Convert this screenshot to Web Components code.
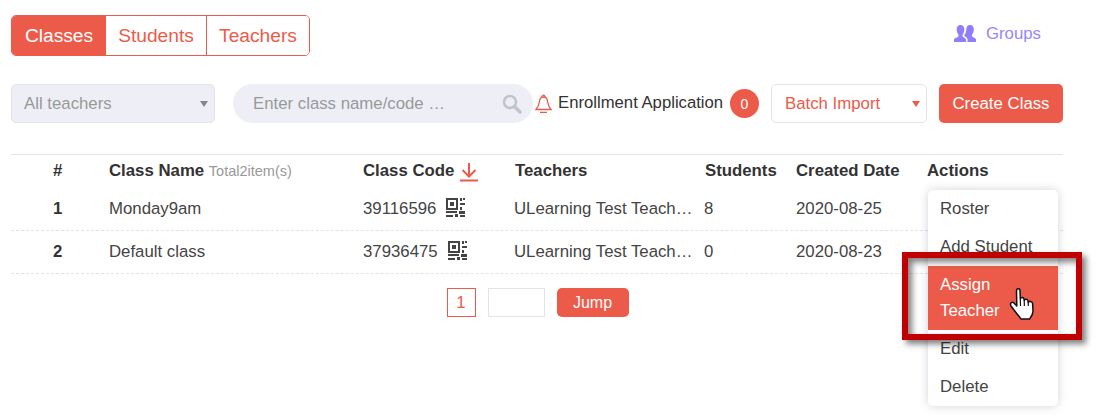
<!DOCTYPE html>
<html lang="en">
<head>
<meta charset="utf-8">
<title>Classes</title>
<style>
    html, body { margin: 0; height: 416px; overflow: hidden; background: #fff; }
    body { font-family: "Liberation Sans", Arial, sans-serif; font-size: 16.8px; color: #444; }
</style>
</head>
<body>
<class-page>
    <top-bar>
        <tab-group>
            <tab-item active style="width: 94px">Classes</tab-item>
            <tab-item style="width: 101px">Students</tab-item>
            <tab-item style="width: 102px">Teachers</tab-item>
        </tab-group>
    </top-bar>
    <filter-bar></filter-bar>
    <class-table>
        <class-row num="1" name="Monday9am" code="39116596" teacher="ULearning Test Teach…" students="8" date="2020-08-25"></class-row>
        <class-row num="2" name="Default class" code="37936475" teacher="ULearning Test Teach…" students="0" date="2020-08-23"></class-row>
    </class-table>
    <page-nav></page-nav>
    <action-menu>
        <menu-item>Roster</menu-item>
        <menu-item>Add Student</menu-item>
        <menu-item active>Assign Teacher</menu-item>
        <menu-item>Edit</menu-item>
        <menu-item>Delete</menu-item>
    </action-menu>
    <call-out></call-out>
    <hand-cursor></hand-cursor>
</class-page>

<script>
// Columnas de la tabla, compartidas por la cabecera y las filas
const COLUMNAS = '42px 56px 254px 152px 190px 91px 131px 136px';

const ICONO_QR = `<svg width="19" height="19" viewBox="0 0 19 19" fill="#444">
    <path fill-rule="evenodd" d="M0 0h12v12H0zM2 2v8h8V2z"/>
    <rect x="4" y="4" width="4" height="4"/>
    <rect x="14" y="0" width="2" height="3"/><rect x="14" y="5" width="5" height="2"/>
    <rect x="14" y="9" width="2" height="3"/>
    <rect x="0" y="13" width="11" height="2"/><rect x="13" y="13" width="6" height="3"/>
    <rect x="0" y="17" width="7" height="2"/><rect x="9" y="16" width="3" height="3"/><rect x="14" y="17" width="5" height="2"/>
    <rect x="17" y="0" width="2" height="2"/>
</svg>`;

// Contenedor general de la pagina
class ClassPage extends HTMLElement {
    constructor() {
        super();
        this.shadow = this.attachShadow({ mode: 'open' });
        this.shadow.innerHTML = `
            <style>
                :host { display: block; position: relative; width: 1097px; height: 416px; box-sizing: border-box; padding: 15px 34px 0 11px; overflow: hidden; }
            </style>
            <slot></slot>
        `;
    }
}

class TopBar extends HTMLElement {
    constructor() {
        super();
        this.shadow = this.attachShadow({ mode: 'open' });
        this.shadow.innerHTML = `
            <style>
                :host { display: flex; justify-content: space-between; align-items: center; height: 41px; }
                .groups { display: flex; align-items: center; gap: 10px; color: #9a86fb; padding-right: 22px; margin-top: -4px; }
            </style>
            <slot></slot>
            <div class="groups">
                <svg width="22" height="18" viewBox="0 0 22 18" fill="#8f7dfa">
                    <path d="M6.500 0C9 0 10.300 2 10.300 4.500c0 2-.8 4-1.800 5.200v1.500c0 1 3.500 1.800 3.500 3.300V17H0v-2.500c0-1.500 4.500-2.300 4.500-3.300V9.700C3.500 8.500 2.700 6.500 2.700 4.500 2.700 2 4 0 6.500 0z"/>
                    <path d="M16 0c2.500 0 3.800 2 3.800 4.500 0 2-.8 4-1.800 5.200v1.500c0 1 4 1.800 4 3.300V17h-8.500v-3c0-1.300-2-2.300-3-2.800v-1.500c1-1.200 1.800-3.200 1.800-5.200C12.300 2 13.500 0 16 0z"/>
                </svg>
                <span>Groups</span>
            </div>
        `;
    }
}

class TabGroup extends HTMLElement {
    constructor() {
        super();
        this.shadow = this.attachShadow({ mode: 'open' });
        this.shadow.innerHTML = `
            <style>
                :host { display: flex; height: 41px; box-sizing: border-box; border: 1px solid #ec5b4a; border-radius: 5px; overflow: hidden; }
            </style>
            <slot></slot>
        `;
    }
}

class TabItem extends HTMLElement {
    constructor() {
        super();
        this.shadow = this.attachShadow({ mode: 'open' });
        this.shadow.innerHTML = `
            <style>
                :host { display: flex; align-items: center; justify-content: center; font-size: 19.2px; color: #ec5b4a; background: #fff; box-sizing: border-box; }
                :host(:nth-child(2)) { border-right: 1px solid #ec5b4a; }
                :host([active]) { background: #ec5b4a; color: #fff; }
            </style>
            <slot></slot>
        `;
    }
}

class FilterBar extends HTMLElement {
    constructor() {
        super();
        this.shadow = this.attachShadow({ mode: 'open' });
        this.shadow.innerHTML = `
            <style>
                :host { display: flex; align-items: center; height: 39px; margin-top: 28px; }
                .select { width: 204px; height: 39px; box-sizing: border-box; display: flex; align-items: center; justify-content: space-between; padding: 0 6px 0 12px; background: #eeeff6; border: 1px solid #e3e3ea; border-radius: 5px; color: #999; }
                .caret { width: 0; height: 0; border-left: 4.500px solid transparent; border-right: 4.500px solid transparent; border-top: 6px solid #888; }
                .search { width: 300px; height: 39px; margin-left: 18px; box-sizing: border-box; display: flex; align-items: center; justify-content: space-between; padding: 0 11px 0 20px; background: #eeeff6; border-radius: 20px; color: #999; }
                .bell { margin-left: 2px; display: block; flex: none; }
                .label { width: 165px; margin-left: 6px; color: #333; margin-top: -2px; font-size: 16.7px; white-space: nowrap; }
                .badge { width: 29px; height: 29px; margin-left: 7px; border-radius: 50%; background: #ec5b4a; color: #fff; font-size: 14px; display: flex; align-items: center; justify-content: center; }
                .batch { width: 156px; height: 39px; margin-left: 12px; box-sizing: border-box; display: flex; align-items: center; justify-content: space-between; padding: 0 6px 0 13px; background: #fff; border: 1px solid #e3e3ea; border-radius: 5px; color: #ec5b4a; }
                .batch .caret { border-top-color: #ec5b4a; }
                .create { width: 124px; height: 39px; margin-left: 12px; display: flex; align-items: center; justify-content: center; background: #ec5b4a; color: #fff; border-radius: 5px; }
            </style>
            <div class="select"><span>All teachers</span><i class="caret"></i></div>
            <div class="search">
                <span>Enter class name/code …</span>
                <svg width="20" height="20" viewBox="0 0 20 20" fill="none" stroke="#c4c4c8">
                    <circle cx="8" cy="8" r="6" stroke-width="2.500"/>
                    <path d="M12.500 12.500L18 18" stroke-width="3.500" stroke-linecap="round"/>
                </svg>
            </div>
            <svg class="bell" width="17" height="20" viewBox="0 0 17 20" fill="none" stroke="#ec5b4a" stroke-width="1.300">
                <path d="M8.500 3C5.500 3 4.500 5.500 4.300 8 4 11.500 3 13 1 15.500h15C14 13 13 11.500 12.700 8 12.500 5.500 11.500 3 8.500 3z"/>
                <path d="M7 3c0-2.500 3-2.500 3 0M5 18.300h7"/>
            </svg>
            <span class="label">Enrollment Application</span>
            <span class="badge">0</span>
            <div class="batch"><span>Batch Import</span><i class="caret"></i></div>
            <div class="create">Create Class</div>
        `;
    }
}

// Tabla de clases: la cabecera esta aqui y las filas llegan por el slot
class ClassTable extends HTMLElement {
    constructor() {
        super();
        this.shadow = this.attachShadow({ mode: 'open' });
        this.shadow.innerHTML = `
            <style>
                :host { display: block; margin-top: 31px; border-top: 1px solid #e3e3ea; }
                .head { display: grid; grid-template-columns: ${COLUMNAS}; height: 33px; box-sizing: border-box; padding-bottom: 2px; align-items: center; font-weight: bold; color: #333; }
                .num { grid-column: 2; }
                .total { font-weight: normal; font-size: 14.500px; color: #999; }
                .code { display: flex; align-items: center; gap: 5px; }
                .code svg { margin-top: 3px; }
            </style>
            <div class="head">
                <span class="num">#</span>
                <span>Class Name <span class="total">Total2item(s)</span></span>
                <span class="code">Class Code
                    <svg width="20" height="19" viewBox="0 0 20 19" fill="none" stroke="#ec5b4a" stroke-width="2">
                        <path d="M10 0v13M3.500 7l6.500 6.500L16.500 7M1 17.500h18"/>
                    </svg>
                </span>
                <span>Teachers</span>
                <span>Students</span>
                <span>Created Date</span>
                <span>Actions</span>
            </div>
            <slot></slot>
        `;
    }
}

class ClassRow extends HTMLElement {
    constructor() {
        super();
        this.shadow = this.attachShadow({ mode: 'open' });
    }

    connectedCallback() {
        const dato = (nombre) => this.getAttribute(nombre);
        this.shadow.innerHTML = `
            <style>
                :host { display: grid; grid-template-columns: ${COLUMNAS}; height: 43px; box-sizing: border-box; align-items: center; border-bottom: 1px dashed #e3e3ea; }
                .num { grid-column: 2; font-weight: bold; color: #333; }
                .code { display: flex; align-items: center; }
                .code svg { margin: -4px 0 0 10px; }
                .teacher { margin-left: -1px; white-space: nowrap; }
                .students { margin-left: -1px; }
            </style>
            <span class="num">${dato('num')}</span>
            <span>${dato('name')}</span>
            <span class="code">${dato('code')}${ICONO_QR}</span>
            <span class="teacher">${dato('teacher')}</span>
            <span class="students">${dato('students')}</span>
            <span>${dato('date')}</span>
        `;
    }
}

class PageNav extends HTMLElement {
    constructor() {
        super();
        this.shadow = this.attachShadow({ mode: 'open' });
        this.shadow.innerHTML = `
            <style>
                :host { display: flex; justify-content: center; align-items: center; gap: 12px; height: 29px; margin-top: 14px; padding-left: 1px; }
                .actual { width: 29px; height: 29px; box-sizing: border-box; border: 1px solid #ec5b4a; color: #ec5b4a; display: flex; align-items: center; justify-content: center; font-size: 16.800px; }
                .salto { width: 57px; height: 29px; box-sizing: border-box; border: 1px solid #e3e3ea; }
                .jump { width: 72px; height: 29px; background: #ec5b4a; color: #fff; border-radius: 5px; display: flex; align-items: center; justify-content: center; font-size: 16px; }
            </style>
            <span class="actual">1</span>
            <span class="salto"></span>
            <span class="jump">Jump</span>
        `;
    }
}

// Menu desplegable sobre la tabla
class ActionMenu extends HTMLElement {
    constructor() {
        super();
        this.shadow = this.attachShadow({ mode: 'open' });
        this.shadow.innerHTML = `
            <style>
                :host { display: block; position: absolute; left: 928px; top: 190px; width: 130px; background: #fff; border-radius: 5px; box-shadow: 0 0 10px rgba(60, 60, 90, .22); }
            </style>
            <slot></slot>
        `;
    }
}

class MenuItem extends HTMLElement {
    constructor() {
        super();
        this.shadow = this.attachShadow({ mode: 'open' });
        this.shadow.innerHTML = `
            <style>
                :host { display: block; padding: 6px 12px; line-height: 26px; color: #444; }
                :host([active]) { background: #ec5b4a; color: #fff; padding-right: 40px; }
            </style>
            <slot></slot>
        `;
    }
}

// Marco rojo de la anotacion sobre la captura
class CallOut extends HTMLElement {
    constructor() {
        super();
        this.shadow = this.attachShadow({ mode: 'open' });
        this.shadow.innerHTML = `
            <style>
                :host { display: block; position: absolute; left: 902px; top: 252px; width: 180px; height: 88px; box-sizing: border-box; border: 6px solid #c00000; box-shadow: 4px 4px 6px rgba(0, 0, 0, .5), inset 4px 4px 6px rgba(0, 0, 0, .5); }
            </style>
        `;
    }
}

class HandCursor extends HTMLElement {
    constructor() {
        super();
        this.shadow = this.attachShadow({ mode: 'open' });
        this.shadow.innerHTML = `
            <style>
                :host { display: block; position: absolute; left: 1010px; top: 288px; width: 24px; height: 33px; }
                svg { display: block; overflow: visible; }
            </style>
            <svg width="24" height="33" viewBox="0 0 24 33" fill="#fff" stroke="#111" stroke-width="1.500" stroke-linejoin="round">
                <path d="M6.500 2.500C6.500.3 10 .3 10 2.500L10.300 11C10.500 9 13.800 9 14 11L14.200 12.500C14.600 10.800 17.800 10.800 18 13L18.200 14.500C18.600 12.800 22.500 13 22.600 15.500L23 23C23 27 21 29 19.500 31L11 31C8 27 4.500 23 1 18C-.5 15.500 2 13 4 15L6.800 18Z"/>
                <path d="M10.300 11L10.500 18M14.200 12.500L14.400 18M18.200 14.500L18.300 18" fill="none" stroke-width="1.200"/>
            </svg>
        `;
    }
}

customElements.define('class-page', ClassPage);
customElements.define('top-bar', TopBar);
customElements.define('tab-group', TabGroup);
customElements.define('tab-item', TabItem);
customElements.define('filter-bar', FilterBar);
customElements.define('class-table', ClassTable);
customElements.define('class-row', ClassRow);
customElements.define('page-nav', PageNav);
customElements.define('action-menu', ActionMenu);
customElements.define('menu-item', MenuItem);
customElements.define('call-out', CallOut);
customElements.define('hand-cursor', HandCursor);
</script>
</body>
</html>
